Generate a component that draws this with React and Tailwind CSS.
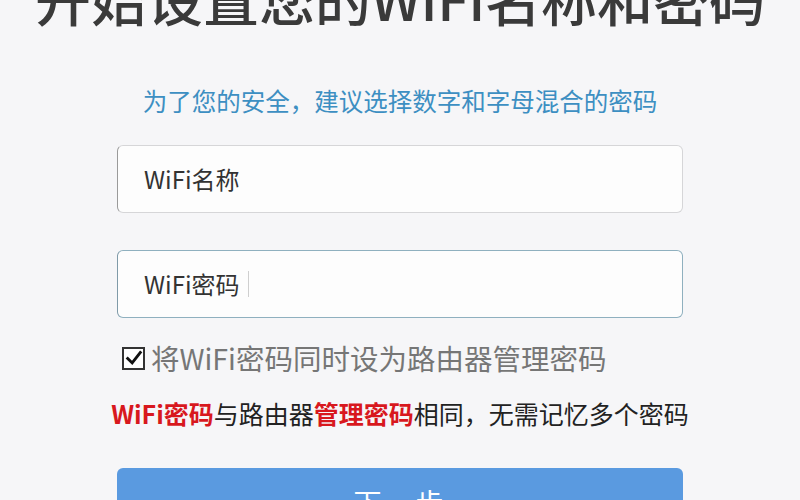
import React from "react";

const cjk = { fontFamily: '"Noto Sans CJK SC", "Noto Sans", sans-serif' };

// checked box in front of the "same password" option
const CheckBox = () => (
  <span className="flex h-[23px] w-[23px] shrink-0 items-center justify-center border-2 border-[#333] bg-white">
    <svg viewBox="0 0 20 20" className="h-[18px] w-[18px]">
      <path d="M3 10.5 L8 15.5 L17 4" fill="none" stroke="#111" strokeWidth="3.2" strokeLinecap="square" />
    </svg>
  </span>
);

const Field = ({ label, focused }) => (
  <div
    className={
      "flex h-[68px] w-full items-center rounded-md border bg-[#fdfdfd] pl-[26px] " +
      (focused ? "border-[#8fb0bf] border-l-[#7f9aa8]" : "border-[#d6d6d8] border-l-[#9a9a9a]")
    }
  >
    <span className="text-[24px] leading-none text-[#333]">{label}</span>
    {focused && <span className="ml-[8px] h-[26px] w-px bg-[#cfcfcf]" />}
  </div>
);

export default function App() {
  return (
    <div className="flex h-[500px] w-[800px] flex-col items-center overflow-hidden bg-[#f6f6f8]" style={cjk}>
      <h1 className="mt-[-31px] whitespace-nowrap text-[56px] font-medium leading-[56px] text-[#3a3a3a]">
        开始设置您的WiFi名称和密码
      </h1>

      <p className="mt-[63px] text-[24.5px] leading-[26px] text-[#3d8fc2]">为了您的安全，建议选择数字和字母混合的密码</p>

      <div className="mt-[31px] flex w-[566px] flex-col">
        <Field label="WiFi名称" />
        <div className="mt-[37px]">
          <Field label="WiFi密码" focused />
        </div>

        <label className="mt-[25px] flex items-center gap-[6px] pl-[5px]">
          <CheckBox />
          <span className="text-[28.5px] leading-[30px] text-[#767676]">将WiFi密码同时设为路由器管理密码</span>
        </label>
      </div>

      <p className="mt-[26px] whitespace-nowrap text-[25px] leading-[28px] text-[#222]">
        <span className="font-bold text-[#d8181e]">WiFi密码</span>与路由器
        <span className="font-bold text-[#d8181e]">管理密码</span>相同，无需记忆多个密码
      </p>

      <button className="mt-[41px] flex h-[60px] w-[566px] shrink-0 items-start justify-center rounded-md bg-[#5a9ae0] pt-[20px] text-[28px] leading-none tracking-[3px] text-white">
        下一步
      </button>
    </div>
  );
}
